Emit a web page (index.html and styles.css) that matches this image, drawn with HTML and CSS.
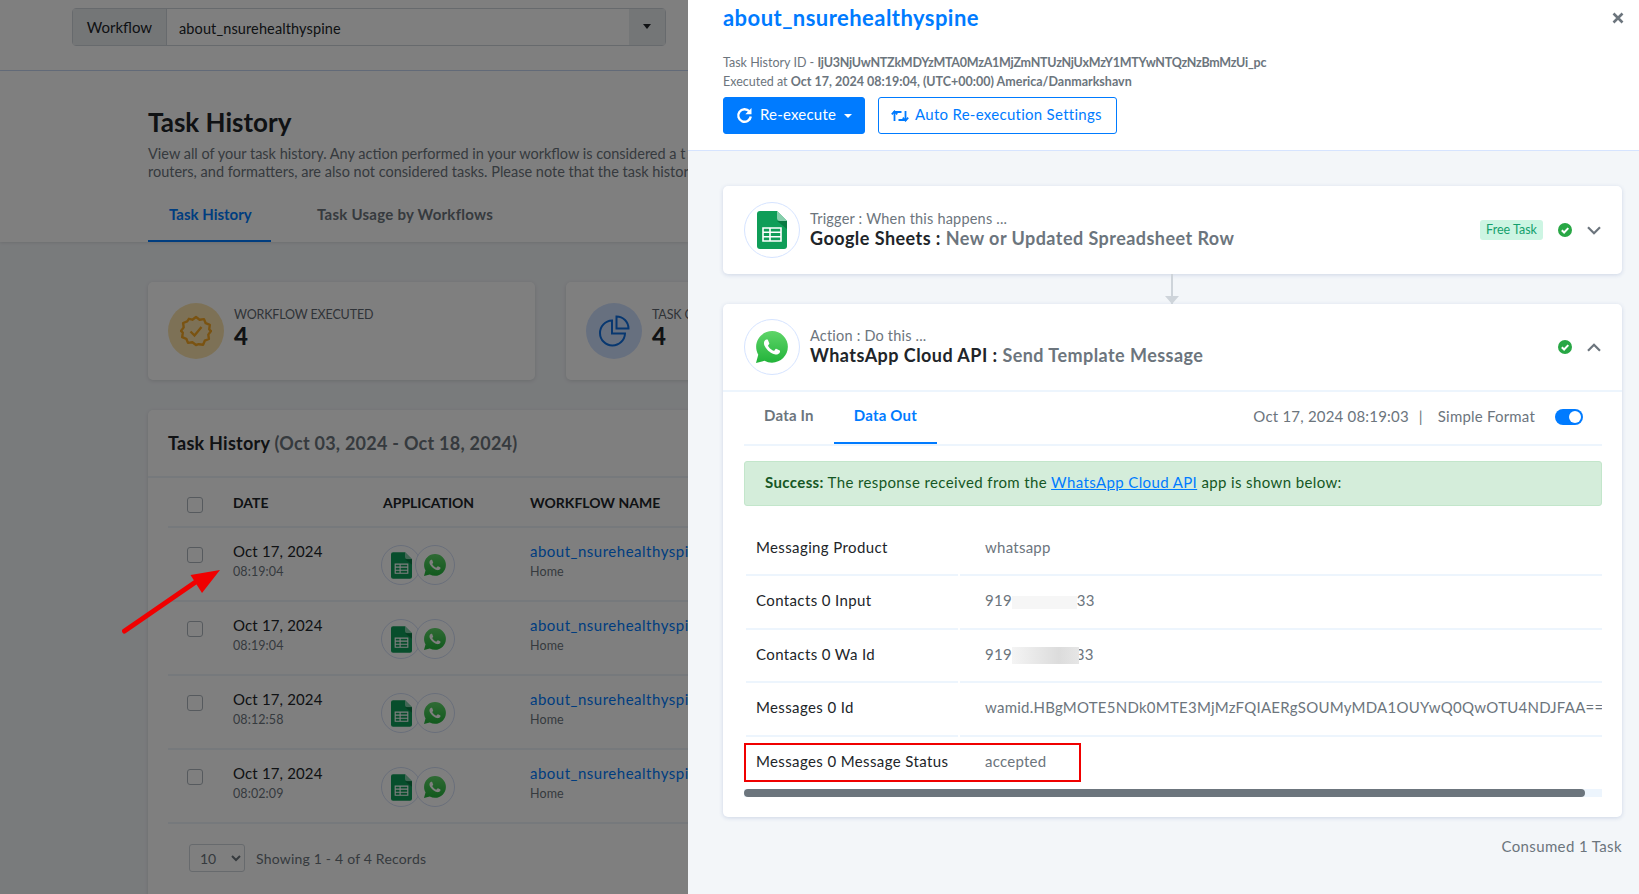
FILE: index.html
```html
<!DOCTYPE html>
<html lang="en">
<head>
    <meta charset="UTF-8">
    <meta name="viewport" content="width=device-width, initial-scale=1.0">
    <title>Task History</title>
    <link rel="stylesheet" href="styles.css">
</head>
<body>
    <svg class="icon-defs" aria-hidden="true">
        <defs>
            <linearGradient id="wa-green" x1="0" y1="0" x2="0" y2="1">
                <stop offset="0" stop-color="#5fd569"/>
                <stop offset="1" stop-color="#22b33a"/>
            </linearGradient>
            <symbol id="icon-sheets" viewBox="0 0 30 38">
                <path d="M3 0h17l10 10v25a3 3 0 0 1-3 3H3a3 3 0 0 1-3-3V3a3 3 0 0 1 3-3z" fill="#0f9d58"/>
                <path d="M20 0l10 10h-7a3 3 0 0 1-3-3z" fill="#87ceac"/>
                <path d="M20 10h10v8z" fill="#0a7a43"/>
                <path d="M6 17h18v13H6zM6 21.300h18M6 25.700h18M13 17v13" fill="none" stroke="#fff" stroke-width="1.600"/>
            </symbol>
            <symbol id="icon-whatsapp" viewBox="0 0 16 16">
                <path d="M13.601 2.326A7.854 7.854 0 0 0 7.994 0C3.627 0 .068 3.558.064 7.926c0 1.399.366 2.76 1.057 3.965L0 16l4.204-1.102a7.933 7.933 0 0 0 3.79.965h.004c4.368 0 7.926-3.558 7.93-7.93A7.898 7.898 0 0 0 13.6 2.326z" fill="url(#wa-green)"/>
                <path d="M11.609 9.587c-.197-.099-1.17-.578-1.353-.646-.182-.065-.315-.099-.445.099-.133.197-.513.646-.627.775-.114.133-.232.148-.43.05-.197-.1-.836-.308-1.592-.985-.59-.525-.985-1.175-1.103-1.372-.114-.198-.011-.304.088-.403.087-.088.197-.232.296-.346.1-.114.133-.198.198-.33.065-.134.034-.248-.015-.347-.05-.099-.445-1.076-.612-1.47-.16-.389-.323-.335-.445-.34-.114-.007-.247-.007-.38-.007a.729.729 0 0 0-.529.247c-.182.198-.691.677-.691 1.654 0 .977.71 1.916.81 2.049.098.133 1.394 2.132 3.383 2.992.47.205.84.326 1.129.418.475.152.904.129 1.246.08.38-.058 1.171-.48 1.338-.943.164-.464.164-.86.114-.943-.049-.084-.182-.133-.38-.232z" fill="#fff"/>
            </symbol>
            <symbol id="icon-check" viewBox="0 0 14 14">
                <circle cx="7" cy="7" r="7" fill="#28a745"/>
                <path d="M3.800 7.200l2.300 2.300 4.200-4.400" fill="none" stroke="#fff" stroke-width="2"/>
            </symbol>
        </defs>
    </svg>

    <div class="page">
        <div class="topbar">
            <div class="workflow-select">
                <span class="workflow-label">Workflow</span>
                <span class="workflow-value">about_nsurehealthyspine</span>
                <span class="workflow-caret"></span>
            </div>
        </div>

        <div class="page-head">
            <h1>Task History</h1>
            <p class="page-desc">View all of your task history. Any action performed in your workflow is considered a t<br>routers, and formatters, are also not considered tasks. Please note that the task histor</p>
            <div class="page-tabs">
                <a class="page-tab active">Task History</a>
                <a class="page-tab">Task Usage by Workflows</a>
            </div>
        </div>

        <div class="stats">
            <div class="stat-card">
                <span class="stat-icon orange">
                    <svg width="32" height="32" viewBox="0 0 32 32" fill="none" stroke="#f5a623" stroke-width="2.400">
                        <path d="M16 2l3.600 2.700 4.400-.6 1.700 4.100 4.100 1.700-.6 4.400L31 16l-2.700 3.600.6 4.400-4.100 1.700-1.700 4.100-4.400-.6L16 30l-3.600-2.700-4.400.6-1.700-4.100-4.100-1.700.6-4.400L1 16l2.700-3.600-.6-4.400 4.100-1.700L8.900 3.800l3.500.9z" stroke-linejoin="round"/>
                        <path d="M10.500 16.500l4 4 7-8.500"/>
                    </svg>
                </span>
                <div>
                    <div class="stat-label">WORKFLOW EXECUTED</div>
                    <div class="stat-num">4</div>
                </div>
            </div>
            <div class="stat-card">
                <span class="stat-icon blue">
                    <svg width="32" height="32" viewBox="0 0 32 32" fill="none" stroke="#0f6fe0" stroke-width="2">
                        <path d="M14 5.500a12.500 12.500 0 1 0 13 13H14z"/>
                        <path d="M18.500 1.500a12 12 0 0 1 12 12h-12z"/>
                    </svg>
                </span>
                <div>
                    <div class="stat-label">TASK C</div>
                    <div class="stat-num">4</div>
                </div>
            </div>
        </div>

        <div class="history-card">
            <div class="history-title">Task History <span>(Oct 03, 2024 - Oct 18, 2024)</span></div>
            <div class="history-table">
                <div class="history-row header">
                    <input type="checkbox" class="check">
                    <span>DATE</span>
                    <span>APPLICATION</span>
                    <span>WORKFLOW NAME</span>
                </div>
                <div class="history-row">
                    <input type="checkbox" class="check">
                    <div class="cell-stack"><div class="cell-main">Oct 17, 2024</div><div class="cell-sub">08:19:04</div></div>
                    <div class="app-icons">
                        <span class="app-icon"><svg width="21" height="27"><use href="#icon-sheets"/></svg></span>
                        <span class="app-icon"><svg width="22" height="22"><use href="#icon-whatsapp"/></svg></span>
                    </div>
                    <div class="cell-stack"><a class="cell-main cell-link">about_nsurehealthyspi</a><div class="cell-sub">Home</div></div>
                </div>
                <div class="history-row">
                    <input type="checkbox" class="check">
                    <div class="cell-stack"><div class="cell-main">Oct 17, 2024</div><div class="cell-sub">08:19:04</div></div>
                    <div class="app-icons">
                        <span class="app-icon"><svg width="21" height="27"><use href="#icon-sheets"/></svg></span>
                        <span class="app-icon"><svg width="22" height="22"><use href="#icon-whatsapp"/></svg></span>
                    </div>
                    <div class="cell-stack"><a class="cell-main cell-link">about_nsurehealthyspi</a><div class="cell-sub">Home</div></div>
                </div>
                <div class="history-row">
                    <input type="checkbox" class="check">
                    <div class="cell-stack"><div class="cell-main">Oct 17, 2024</div><div class="cell-sub">08:12:58</div></div>
                    <div class="app-icons">
                        <span class="app-icon"><svg width="21" height="27"><use href="#icon-sheets"/></svg></span>
                        <span class="app-icon"><svg width="22" height="22"><use href="#icon-whatsapp"/></svg></span>
                    </div>
                    <div class="cell-stack"><a class="cell-main cell-link">about_nsurehealthyspi</a><div class="cell-sub">Home</div></div>
                </div>
                <div class="history-row">
                    <input type="checkbox" class="check">
                    <div class="cell-stack"><div class="cell-main">Oct 17, 2024</div><div class="cell-sub">08:02:09</div></div>
                    <div class="app-icons">
                        <span class="app-icon"><svg width="21" height="27"><use href="#icon-sheets"/></svg></span>
                        <span class="app-icon"><svg width="22" height="22"><use href="#icon-whatsapp"/></svg></span>
                    </div>
                    <div class="cell-stack"><a class="cell-main cell-link">about_nsurehealthyspi</a><div class="cell-sub">Home</div></div>
                </div>
            </div>
            <div class="pager">
                <select class="pager-select"><option>10</option></select>
                <span>Showing 1 - 4 of 4 Records</span>
            </div>
        </div>

        <div class="backdrop"></div>
        <!-- annotation from the screenshot -->
        <svg class="red-arrow" width="110" height="75" viewBox="0 0 110 75">
            <path d="M2.500 68L78 16" stroke="#f00000" stroke-width="5" stroke-linecap="round"/>
            <path d="M98 7L68.500 12L80 30z" fill="#f00000"/>
        </svg>
    </div>

    <div class="drawer">
        <div class="drawer-head">
            <h2>about_nsurehealthyspine</h2>
            <button class="close-btn" aria-label="Close">
                <svg width="12" height="12" viewBox="0 0 12 12"><path d="M1.500 1.500l9 9M10.500 1.500l-9 9" stroke="#6c757d" stroke-width="2.600"/></svg>
            </button>
            <div class="meta">Task History ID - <b class="meta-id">IjU3NjUwNTZkMDYzMTA0MzA1MjZmNTUzNjUxMzY1MTYwNTQzNzBmMzUi_pc</b></div>
            <div class="meta">Executed at <b>Oct 17, 2024 08:19:04, (UTC+00:00) America/Danmarkshavn</b></div>
            <div class="head-actions">
                <button class="btn btn-primary">
                    <svg width="17" height="17" viewBox="0 0 17 17" fill="none">
                        <path d="M13.300 4.300A6.300 6.300 0 1 0 14.800 9.500" stroke="#fff" stroke-width="2.400"/>
                        <path d="M15.500 1v6.200H9.300z" fill="#fff"/>
                    </svg>
                    <span class="btn-text">Re-execute</span>
                    <span class="caret"></span>
                </button>
                <button class="btn btn-outline">
                    <svg width="18" height="14" viewBox="0 0 18 14" fill="none" stroke="#007bff" stroke-width="1.800">
                        <path d="M3.500 12V3h7M14.500 2v9h-7"/>
                        <path d="M.8 5.300l2.700-3 2.700 3M11.800 8.700l2.700 3 2.700-3"/>
                    </svg>
                    <span class="btn-text">Auto Re-execution Settings</span>
                </button>
            </div>
        </div>

        <div class="drawer-body">
            <div class="step-card">
                <div class="step-head">
                    <span class="step-icon"><svg width="30" height="38"><use href="#icon-sheets"/></svg></span>
                    <div class="step-text">
                        <div class="step-kind">Trigger : When this happens ...</div>
                        <div class="step-title">Google Sheets : <span>New or Updated Spreadsheet Row</span></div>
                    </div>
                    <span class="free-badge">Free Task</span>
                    <svg class="status" width="14" height="14"><use href="#icon-check"/></svg>
                    <svg class="chevron" width="14" height="9" viewBox="0 0 14 9"><path d="M1 1.200l6 6 6-6" fill="none" stroke="#6c757d" stroke-width="2.200"/></svg>
                </div>
            </div>

            <div class="connector"><span class="connector-tip"></span></div>

            <div class="step-card open">
                <div class="step-head">
                    <span class="step-icon"><svg width="32" height="32"><use href="#icon-whatsapp"/></svg></span>
                    <div class="step-text">
                        <div class="step-kind">Action : Do this ...</div>
                        <div class="step-title">WhatsApp Cloud API : <span>Send Template Message</span></div>
                    </div>
                    <svg class="status" width="14" height="14"><use href="#icon-check"/></svg>
                    <svg class="chevron" width="14" height="9" viewBox="0 0 14 9"><path d="M1 7.800l6-6 6 6" fill="none" stroke="#6c757d" stroke-width="2.200"/></svg>
                </div>

                <div class="step-content">
                    <div class="data-tabs">
                        <a class="data-tab">Data In</a>
                        <a class="data-tab active">Data Out</a>
                        <div class="data-tabs-right">
                            <span>Oct 17, 2024 08:19:03</span>
                            <span class="sep">|</span>
                            <span>Simple Format</span>
                            <span class="toggle"></span>
                        </div>
                    </div>

                    <div class="alert-success"><b>Success:</b> The response received from the <a>WhatsApp Cloud API</a> app is shown below:</div>

                    <div class="data-table">
                        <div class="data-row"><div class="data-key">Messaging Product</div><div class="data-val">whatsapp</div></div>
                        <div class="data-row"><div class="data-key">Contacts 0 Input</div><div class="data-val">919<span class="smudge light"></span>33</div></div>
                        <div class="data-row"><div class="data-key">Contacts 0 Wa Id</div><div class="data-val">919<span class="smudge dark"></span>33</div></div>
                        <div class="data-row"><div class="data-key">Messages 0 Id</div><div class="data-val">wamid.HBgMOTE5NDk0MTE3MjMzFQIAERgSOUMyMDA1OUYwQ0QwOTU4NDJFAA==</div></div>
                        <div class="data-row last"><div class="data-key">Messages 0 Message Status</div><div class="data-val">accepted</div></div>
                        <div class="red-box"></div>
                    </div>

                    <div class="scroll-track"><div class="scroll-thumb"></div></div>
                </div>
            </div>

            <div class="consumed">Consumed 1 Task</div>
        </div>
    </div>
</body>
</html>
```

FILE: styles.css
```css
* {
    box-sizing: border-box;
}
body {
    margin: 0;
    height: 894px;
    display: flex;
    overflow: hidden;
    font-family: Lato, "Open Sans", sans-serif;
    font-size: 15px;
    color: #212529;
    background: #f3f6f9;
}
.icon-defs {
    position: absolute;
    width: 0;
    height: 0;
}
svg {
    display: block;
    flex-shrink: 0;
}
a {
    color: #007bff;
}

/* page behind the drawer */
.page {
    position: relative;
    width: 688px;
    flex-shrink: 0;
    overflow: hidden;
}
.backdrop {
    position: absolute;
    inset: 0;
    background: rgba(0,0,0,0.5);
}
.red-arrow {
    position: absolute;
    left: 122px;
    top: 563px;
}
.topbar {
    height: 71px;
    padding: 8px 22px 0 72px;
    background: #fff;
    border-bottom: 1px solid #c8d8f5;
}
.workflow-select {
    display: flex;
    height: 38px;
    border: 1px solid #ced4da;
    border-radius: 4px;
}
.workflow-label {
    width: 94px;
    line-height: 36px;
    text-align: center;
    background: #e9ecef;
    border-right: 1px solid #ced4da;
}
.workflow-value {
    flex: 1;
    padding-left: 12px;
    line-height: 39px;
    font-size: 14.500px;
    letter-spacing: 0.12px;
}
.workflow-caret {
    width: 36px;
    background: #e9ecef;
    position: relative;
}
.workflow-caret::after {
    content: "";
    position: absolute;
    left: 14px;
    top: 15px;
    border: 4px solid transparent;
    border-top: 5px solid #212529;
    border-bottom: 0;
}
.page-head {
    height: 171px;
    padding: 35px 0 0 148px;
    background: #fff;
    box-shadow: 0 1px 3px rgba(0,0,0,0.1);
    white-space: nowrap;
}
.page-head h1 {
    margin: 0;
    font-size: 26px;
    line-height: 32px;
    font-weight: 700;
}
.page-desc {
    margin: 7px 0 0;
    font-size: 14.500px;
    line-height: 18px;
    color: #6c757d;
}
.page-tabs {
    display: flex;
    margin-top: 12px;
}
.page-tab {
    height: 49px;
    padding: 0 21px;
    line-height: 42px;
    font-size: 15px;
    font-weight: 700;
    color: #6c757d;
    margin-right: 25px;
    letter-spacing: 0.25px;
}
.page-tab.active {
    width: 123px;
    padding-right: 0;
    letter-spacing: 0;
    color: #007bff;
    border-bottom: 2px solid #007bff;
}
.stats {
    display: flex;
    gap: 31px;
    padding: 40px 0 0 148px;
}
.stat-card {
    display: flex;
    align-items: center;
    gap: 10px;
    flex: 0 0 387px;
    height: 98px;
    padding-left: 20px;
    background: #fff;
    border-radius: 5px;
    box-shadow: 0 1px 4px rgba(0,0,0,0.12);
}
.stat-icon {
    display: flex;
    align-items: center;
    justify-content: center;
    width: 56px;
    height: 56px;
    border-radius: 50%;
}
.stat-icon.orange {
    background: #fbe3ad;
}
.stat-icon.blue {
    background: #cfe0ff;
}
.stat-label {
    font-size: 12.500px;
    letter-spacing: -0.15px;
    color: #5f6770;
    margin-top: -6px;
}
.stat-num {
    font-size: 24px;
    line-height: 28px;
    font-weight: 900;
}
.history-card {
    width: 800px;
    height: 520px;
    margin: 30px 0 0 148px;
    background: #fff;
    border-radius: 5px;
    box-shadow: 0 1px 4px rgba(0,0,0,0.12);
}
.history-title {
    height: 68px;
    padding: 21px 20px 0;
    font-size: 18px;
    line-height: 24px;
    font-weight: 700;
    letter-spacing: 0.25px;
    border-bottom: 2px solid #edf2f9;
}
.history-title span {
    color: #6c757d;
}
.history-table {
    padding: 0 20px;
}
.history-row {
    display: grid;
    grid-template-columns: 65px 150px 147px 1fr;
    align-items: center;
    height: 74px;
    white-space: nowrap;
    border-bottom: 2px solid #edf2f9;
}
.history-row.header {
    height: 50px;
    font-size: 14px;
    font-weight: 700;
}
.check {
    appearance: none;
    width: 16px;
    height: 16px;
    margin: 6px 0 0 19px;
    border: 1px solid #adb5bd;
    border-radius: 3px;
    background: #fff;
}
.history-row:not(.header) .check {
    margin-top: -18px;
}
.cell-stack {
    padding-bottom: 6px;
}
.cell-main {
    display: block;
    margin-bottom: 1px;
    font-size: 15px;
    line-height: 21px;
    letter-spacing: 0.15px;
}
.cell-sub {
    font-size: 12.500px;
    line-height: 18px;
    color: #6c757d;
    letter-spacing: 0.1px;
}
.cell-link {
    letter-spacing: 0.5px;
}
.app-icons {
    display: flex;
    margin: 2px 0 0 -2px;
}
.app-icon {
    display: flex;
    align-items: center;
    justify-content: center;
    width: 40px;
    height: 40px;
    border: 1px solid #d3def5;
    border-radius: 50%;
    background: #fff;
}
.app-icon + .app-icon {
    margin-left: -6px;
}
.pager {
    display: flex;
    align-items: center;
    gap: 11px;
    padding: 20px 0 0 41px;
    font-size: 14px;
    color: #6c757d;
    letter-spacing: 0.2px;
}
.pager-select {
    width: 56px;
    height: 28px;
    padding-left: 6px;
    font-family: inherit;
    font-size: 14px;
    color: #6c757d;
    background: #fff;
    border: 1px solid #ced4da;
    border-radius: 3px;
}

/* drawer */
.drawer {
    flex: 1;
    min-width: 0;
    background: #f3f6f9;
}
.drawer-head {
    position: relative;
    height: 151px;
    padding: 0 35px;
    background: #fff;
    border-bottom: 1px solid #d6e4ff;
}
.drawer-head h2 {
    margin: 0 0 17px;
    font-size: 22px;
    line-height: 36px;
    font-weight: 700;
    color: #007bff;
    letter-spacing: 0.45px;
}
.close-btn {
    position: absolute;
    right: 15px;
    top: 12px;
    padding: 0;
    border: 0;
    background: none;
}
.meta {
    font-size: 12.500px;
    line-height: 19px;
    color: #6c757d;
    white-space: nowrap;
}
.meta-id {
    letter-spacing: -0.25px;
}
.head-actions {
    display: flex;
    gap: 13px;
    margin-top: 6px;
}
.btn {
    display: inline-flex;
    align-items: center;
    gap: 6px;
    height: 37px;
    padding: 0 12px;
    font-family: inherit;
    font-size: 15px;
    letter-spacing: 0.2px;
    border-radius: 3px;
}
.btn-text {
    margin-top: -3px;
}
.btn-primary {
    gap: 7px;
    color: #fff;
    background: #007bff;
    border: 1px solid #007bff;
}
.btn-outline {
    gap: 6px;
    padding-right: 14px;
    letter-spacing: 0.28px;
    color: #007bff;
    background: #fff;
    border: 1px solid #007bff;
}
.caret {
    margin-left: 1px;
    border: 4px solid transparent;
    border-top: 4px solid #fff;
    border-bottom: 0;
}
.drawer-body {
    padding: 35px 17px 0 35px;
}
.step-card {
    background: #fff;
    border-radius: 5px;
    box-shadow: 0 1px 4px rgba(60,90,160,0.2);
}
.step-head {
    display: flex;
    align-items: center;
    height: 88px;
    padding: 0 21px;
}
.step-card.open .step-head {
    border-bottom: 2px solid #edf5fd;
}
.step-icon {
    display: flex;
    align-items: center;
    justify-content: center;
    width: 56px;
    height: 56px;
    border: 1px solid #d6e4ff;
    border-radius: 50%;
}
.step-text {
    flex: 1;
    margin: -2px 0 0 10px;
}
.step-kind {
    font-size: 14.500px;
    line-height: 19px;
    color: #6c757d;
    letter-spacing: 0.2px;
}
.step-title {
    font-size: 18px;
    line-height: 21px;
    font-weight: 700;
    letter-spacing: 0.45px;
}
.step-title span {
    color: #6c757d;
}
.free-badge {
    width: 63px;
    height: 20px;
    line-height: 20px;
    text-align: center;
    font-size: 12.500px;
    color: #13a06c;
    background: #cdf5e3;
    border-radius: 3px;
}
.status {
    margin-left: 15px;
}
.chevron {
    margin-left: 15px;
}
.connector {
    position: relative;
    width: 2px;
    height: 30px;
    margin-left: 448px;
    background: #ced4da;
}
.connector-tip {
    position: absolute;
    left: -6px;
    bottom: 0;
    border: 7px solid transparent;
    border-top: 8px solid #ced4da;
    border-bottom: 0;
}
.step-content {
    padding: 0 20px 20px 21px;
}
.data-tabs {
    display: flex;
    align-items: stretch;
    height: 54px;
    border-bottom: 2px solid #edf5fd;
}
.data-tab {
    height: 52px;
    padding: 0 20px;
    line-height: 46px;
    font-size: 15px;
    font-weight: 700;
    letter-spacing: 0.2px;
    color: #6c757d;
}
.data-tab.active {
    color: #007bff;
    border-bottom: 2px solid #007bff;
}
.data-tabs-right {
    display: flex;
    align-items: center;
    gap: 10px;
    margin: -4px 0 0 auto;
    padding-right: 19px;
    font-size: 15px;
    color: #6c757d;
    letter-spacing: 0.2px;
}
.sep {
    color: #6c757d;
    margin-right: 5px;
}
.toggle {
    position: relative;
    top: 1px;
    width: 28px;
    height: 16px;
    margin-left: 10px;
    background: #007bff;
    border-radius: 8px;
}
.toggle::after {
    content: "";
    position: absolute;
    right: 2px;
    top: 2px;
    width: 12px;
    height: 12px;
    background: #fff;
    border-radius: 50%;
}
.alert-success {
    height: 45px;
    margin-top: 15px;
    padding-left: 20px;
    line-height: 41px;
    font-size: 15px;
    letter-spacing: 0.38px;
    color: #155724;
    background: #d4edda;
    border: 1px solid #c3e6cb;
    border-radius: 3px;
}
.alert-success a {
    text-decoration: underline;
}
.data-table {
    position: relative;
    margin-top: 17px;
    overflow: hidden;
}
.data-row {
    display: grid;
    grid-template-columns: 212px 1fr;
    column-gap: 2px;
    height: 53.400px;
    padding-left: 2px;
    white-space: nowrap;
    line-height: 48px;
}
.data-key {
    padding-left: 10px;
    font-size: 15px;
    letter-spacing: 0.38px;
    border-bottom: 2px solid #edf5fd;
}
.data-val {
    padding-left: 25px;
    font-size: 15px;
    letter-spacing: 0.25px;
    color: #6c757d;
    overflow: hidden;
    border-bottom: 2px solid #edf5fd;
}
.data-row.last {
    height: 52px;
}
.data-row.last .data-key,
.data-row.last .data-val {
    border-bottom: 0;
}
.smudge {
    display: inline-block;
    width: 65px;
    vertical-align: middle;
}
.smudge.light {
    height: 13px;
    background: #f6f6f6;
}
.smudge.dark {
    width: 67px;
    height: 17px;
    margin-right: -3px;
    position: relative;
    background: linear-gradient(90deg, #f4f4f4, #dcdcdc 70%, #e6e6e6);
}
.red-box {
    position: absolute;
    left: 0;
    bottom: 7px;
    width: 337px;
    height: 39px;
    border: 2px solid #f00000;
}
.scroll-track {
    height: 8px;
    background: #edf5fd;
}
.scroll-thumb {
    width: 841px;
    height: 8px;
    background: #6c757d;
    border-radius: 4px;
}
.consumed {
    margin-top: 20px;
    text-align: right;
    font-size: 15px;
    color: #6c757d;
    letter-spacing: 0.38px;
}
```
